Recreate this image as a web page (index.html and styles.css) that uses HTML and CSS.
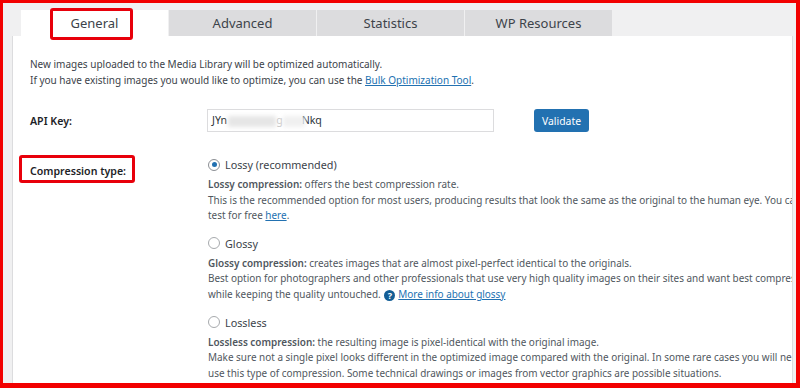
FILE: index.html
```html
<!DOCTYPE html>
<html lang="en">
<head>
    <meta charset="UTF-8">
    <title>Image optimization settings</title>
    <link rel="stylesheet" href="styles.css">
</head>
<body>
    <div class="frame">
        <div class="tabs">
            <div class="tab active">General<span class="mark mark-tab"></span></div>
            <div class="tab">Advanced</div>
            <div class="tab">Statistics</div>
            <div class="tab">WP Resources</div>
        </div>

        <div class="panel">
            <div class="intro">
                <p>New images uploaded to the Media Library will be optimized automatically.</p>
                <p>If you have existing images you would like to optimize, you can use the <a href="#">Bulk Optimization Tool</a>.</p>
            </div>

            <div class="row row-key">
                <div class="label">API Key:</div>
                <div class="field">
                    <div class="key-input">JYn<span class="blur"></span><span class="blur-g">g</span><span class="blur2"></span>Nkq</div>
                    <button class="btn">Validate</button>
                </div>
            </div>

            <div class="row row-type">
                <div class="label label-type">Compression type:<span class="mark mark-label"></span></div>
                <div class="field options">
                    <div class="option">
                        <label class="radio"><span class="dot checked"></span>Lossy (recommended)</label>
                        <div class="desc">
                            <p><strong>Lossy compression:</strong> offers the best compression rate.</p>
                            <p>This is the recommended option for most users, producing results that look the same as the original to the human eye. You can</p>
                            <p>test for free <a href="#">here</a>.</p>
                        </div>
                    </div>
                    <div class="option">
                        <label class="radio"><span class="dot"></span>Glossy</label>
                        <div class="desc">
                            <p><strong>Glossy compression:</strong> creates images that are almost pixel-perfect identical to the originals.</p>
                            <p>Best option for photographers and other professionals that use very high quality images on their sites and want best compression</p>
                            <p>while keeping the quality untouched. <span class="help">?</span><a href="#">More info about glossy</a></p>
                        </div>
                    </div>
                    <div class="option">
                        <label class="radio"><span class="dot"></span>Lossless</label>
                        <div class="desc">
                            <p><strong>Lossless compression:</strong> the resulting image is pixel-identical with the original image.</p>
                            <p>Make sure not a single pixel looks different in the optimized image compared with the original. In some rare cases you will need to</p>
                            <p>use this type of compression. Some technical drawings or images from vector graphics are possible situations.</p>
                        </div>
                    </div>
                </div>
            </div>
        </div>
    </div>
</body>
</html>
```

FILE: styles.css
```css
body {
    margin: 0;
    overflow: hidden;
    font-family: "Noto Sans", "Open Sans", sans-serif;
    font-size: 10px;
    color: #3c434a;
}
p {
    margin: 0;
}
a {
    color: #2271b1;
    text-decoration: underline;
}
.frame {
    box-sizing: border-box;
    width: 800px;
    height: 388px;
    border: 3px solid #f20000;
    border-right-width: 4px;
    border-bottom-width: 5px;
    background: #f0f0f1;
    overflow: hidden;
}
.tabs {
    display: flex;
    gap: 1px;
    padding-left: 18px;
    margin-top: 7px;
    height: 26px;
}
.tab {
    position: relative;
    width: 147px;
    background: #dcdcde;
    text-align: center;
    line-height: 27px;
    font-size: 13px;
    color: #3c434a;
}
.tab.active {
    background: #fff;
}
.mark {
    position: absolute;
    border: 3px solid #e8000b;
    border-radius: 3px;
}
.mark-tab {
    left: 29px;
    top: -2px;
    width: 77px;
    height: 26px;
}
.panel {
    margin-left: 9px;
    margin-right: 3px;
    height: 360px;
    background: #fff;
    border-left: 1px solid #dcdcde;
    border-right: 1px solid #dcdcde;
    padding: 20px 0 0 17px;
    overflow: hidden;
}
.intro {
    line-height: 16px;
    color: #3c434a;
}
.row {
    display: flex;
}
.label {
    position: relative;
    width: 178px;
    flex: none;
    font-size: 10.6px;
    font-weight: 600;
    color: #1d2327;
}
.row-key {
    margin-top: 21px;
    align-items: center;
}
.field {
    display: flex;
    align-items: center;
}
.key-input {
    box-sizing: border-box;
    width: 287px;
    height: 23px;
    margin-left: -1px;
    border: 1px solid #dcdcde;
    padding-left: 4px;
    font-size: 10.6px;
    line-height: 21px;
    color: #2c3338;
    white-space: nowrap;
    overflow: hidden;
}
.blur, .blur2 {
    display: inline-block;
    vertical-align: middle;
    height: 11px;
    background: #e6e6e6;
    filter: blur(2px);
}
.blur {
    width: 48px;
    margin-left: 1px;
}
.blur2 {
    width: 22px;
    margin-right: -3px;
    background: #f0f0f0;
}
.blur-g {
    color: #c8c8c8;
}
.btn {
    margin-left: 40px;
    height: 23px;
    width: 55px;
    padding: 0;
    border: none;
    border-radius: 3px;
    background: #2271b1;
    color: #fff;
    font-family: inherit;
    font-size: 10.4px;
}
.row-type {
    margin-top: 24px;
}
.label-type {
    padding-top: 7px;
    line-height: 16px;
}
.mark-label {
    left: -11px;
    top: -1px;
    width: 110px;
    height: 22px;
}
.options {
    flex-direction: column;
    align-items: flex-start;
}
.option {
    margin-bottom: 12px;
}
.radio {
    display: flex;
    align-items: center;
    height: 17px;
    margin-bottom: 3px;
    font-size: 10.8px;
    color: #3c434a;
}
.dot {
    box-sizing: border-box;
    width: 12px;
    height: 12px;
    margin-right: 5px;
    border: 1px solid #a7aaad;
    border-radius: 50%;
    position: relative;
}
.dot.checked {
    border-color: #8c8f94;
}
.dot.checked::after {
    content: "";
    position: absolute;
    left: 2.5px;
    top: 2.5px;
    width: 5px;
    height: 5px;
    border-radius: 50%;
    background: #2271b1;
}
.desc {
    font-size: 9.95px;
    line-height: 15.6px;
    color: #50575e;
    white-space: nowrap;
}
.desc p {
    padding-top: 1px;
    margin-bottom: -1px;
}
.desc strong {
    font-weight: 600;
}
.help {
    display: inline-block;
    width: 11px;
    height: 11px;
    margin: 0 3px 0 1px;
    border-radius: 50%;
    background: #135e96;
    color: #fff;
    font-size: 9px;
    font-weight: 700;
    line-height: 11px;
    text-align: center;
    vertical-align: -1px;
}
```
